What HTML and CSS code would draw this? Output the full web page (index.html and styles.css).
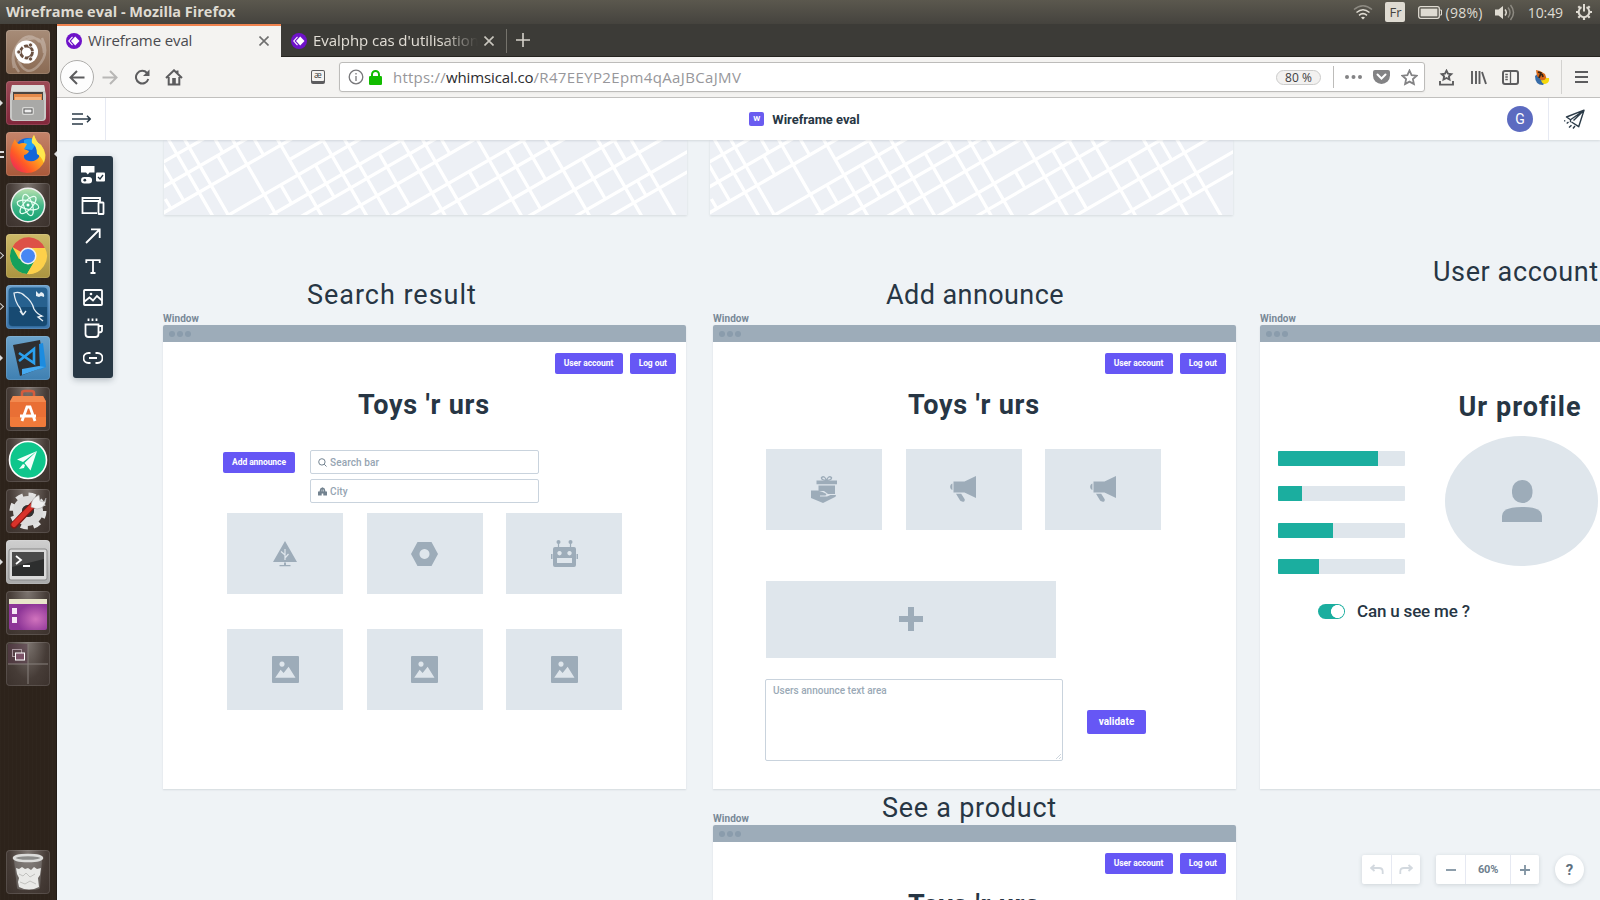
FILE: index.html
```html
<!DOCTYPE html>
<html lang="fr">
<head>
<meta charset="utf-8">
<title>Wireframe eval</title>
<link rel="stylesheet" href="styles.css">
</head>
<body>
<svg class="defs" aria-hidden="true">
  <symbol id="map" viewBox="0 0 523 75">
    <rect width="523" height="75" fill="#edf0f5"/>
    <g transform="translate(0 36.700) rotate(-30)" fill="none" stroke="#fff" stroke-width="3.300">
      <path d="M-60-13H480M-60 8.500H480M-60 31H480M-60 65.500H480M-60 87H480M-60 103H480M117 123H480M-60 148H480M-60 167.500H480M-60 193.500H480M-60 216.500H480M-60 240H480M-60 257.500H480"/>
      <path d="M5-60V31M22.500-60V290M36.500-60V290M78-60V290M117-60V290M156-60V290M175 31V290M224-60V290M242.500-60V290M290-60V290M329-60V193.500M349-60V290M394-60V290M423-60V290"/>
      <path d="M57 8.500V31M97 8.500V31M97 65.500V87M137 65.500V87M137 87V103M198 87V103M198 103V123M259 103V123M198 123V148M267 148V167.500M310 148V167.500M310 167.500V193.500M310 193.500V216.500M371 193.500V216.500M408 193.500V216.500M371 216.500V240M408 240V257.500M117 48H156M-10 20V31M63-13V8.500"/>
    </g>
  </symbol>
  <symbol id="picture" viewBox="0 0 27 27"><path fill="#9dacb9" fill-rule="evenodd" d="M1 0h25a1 1 0 0 1 1 1v25a1 1 0 0 1-1 1H1a1 1 0 0 1-1-1V1a1 1 0 0 1 1-1zM3.200 21.800h20.300L16.600 10.800l-5 6.200-3-3.200zM10 5.500a2.600 2.600 0 1 0 .01 0z"/></symbol>
  <symbol id="megaphone" viewBox="0 0 27 27"><path fill="#9dacb9" d="M3.500 5.500h11L26 0v22l-11.500-5.500h-11zM2.400 7.500v6.500C-.6 13 -.6 8.500 2.400 7.500zM6 17.800h5.200l3.500 5.500c.6 3-3 3-4.600 1.300z"/></symbol>
  <symbol id="whim" viewBox="0 0 16 16"><circle cx="8" cy="8" r="8" fill="#6f12c9"/><path fill="#fff" d="m9.200 3.400 4.300 4.600-4.300 4.600L5 8z"/><path d="M6.500 3.800 2.800 8l3.700 4.200" fill="none" stroke="#fff" stroke-width="1.100"/></symbol>
</svg>

<header class="panel">
  <span class="panel-title">Wireframe eval - Mozilla Firefox</span>
  <div class="tray">
    <svg class="wifi" width="20" height="16" viewBox="0 0 20 16" fill="none" stroke="#dfdbd2" stroke-width="1.500"><path d="M1 5.500q9-7.500 18 0" stroke="#8d8a82"/><path d="M3.500 8.500q6.500-5.500 13 0M6 11.300q4-3.300 8 0"/><path d="m8 13.500 2 2 2-2q-2-1.500-4 0z" fill="#dfdbd2" stroke="none"/></svg>
    <span class="lang">Fr</span>
    <svg class="battery" width="24" height="13" viewBox="0 0 24 13"><rect x=".7" y=".7" width="20.600" height="11.600" rx="2" fill="none" stroke="#dfdbd2" stroke-width="1.300"/><rect x="2.600" y="2.600" width="16.800" height="7.800" fill="#dfdbd2"/><path d="M22 4h1.500v5H22" fill="none" stroke="#dfdbd2"/></svg>
    <span class="pct">(98%)</span>
    <svg class="sound" width="20" height="17" viewBox="0 0 20 17"><path fill="#dfdbd2" d="M0 5.500h3.500L8 2v13l-4.500-3.500H0z"/><path fill="none" stroke="#dfdbd2" stroke-width="1.500" d="M10 5.500q2.500 3 0 6"/><path fill="none" stroke="#8d8a82" stroke-width="1.500" d="M13 3.500q4 5 0 10M15.500 1q6 7.500 0 15"/></svg>
    <span class="clock">10:49</span>
    <svg class="gear" width="16" height="16" viewBox="0 0 16 16" fill="none" stroke="#dfdbd2"><path stroke-width="2" d="M5.500 3.200a5.300 5.300 0 1 0 5 0M8 0v7.500"/><path stroke-width="2.200" d="M0 8h2.500M13.500 8H16M8 13.500V16M2.300 2.300l1.700 1.700M13.700 2.300 12 4M2.300 13.700 4 12M13.700 13.700 12 12"/></svg>
  </div>
</header>

<div class="desktop">
  <nav class="launcher">
    <div class="tile ubuntu"><svg viewBox="0 0 44 44"><g fill="none" stroke="#fff" opacity=".28"><path d="M8 38Q3 17 20 10T38 23M13 42Q2 28 12 14T34 12M36 8Q44 24 32 36T12 30" stroke-width="2.500"/></g><circle cx="20.500" cy="22" r="11.500" fill="#fff"/><circle cx="20.500" cy="22" r="6" fill="none" stroke="#6b5142" stroke-width="2.800" stroke-dasharray="11 1.560"/><g fill="#6b5142" stroke="#fff" stroke-width=".8"><circle cx="12.800" cy="22" r="2.100"/><circle cx="24.500" cy="15" r="2.100"/><circle cx="24.500" cy="29" r="2.100"/></g></svg></div>
    <div class="tile files"><i class="pip"></i><svg viewBox="0 0 44 44"><path d="M6 4h32l2 10v22q0 4-4 4H8q-4 0-4-4V14z" fill="#c9c9c7"/><path d="M6 4h32l1 6H5z" fill="#dededc"/><path d="M7 11h30v10H7z" fill="#4c4440"/><path d="M8 13h28v8H8z" fill="#e58a4b"/><path d="M9 16h26v5H9z" fill="#f6b27c"/><path d="M6 19h32v18q0 2-2 2H8q-2 0-2-2z" fill="#a9a9a7"/><rect x="16" y="26" width="12" height="8" rx="2" fill="#d8d8d6"/><rect x="18" y="28" width="8" height="4" fill="#eee" stroke="#555"/></svg></div>
    <div class="tile firefox"><i class="pip two"></i><i class="pip right"></i><svg viewBox="0 0 44 44"><defs><linearGradient id="ff" x1="1" y1="0" x2="0" y2="1"><stop offset="0" stop-color="#fff35a"/><stop offset=".38" stop-color="#ffb01f"/><stop offset=".68" stop-color="#ff5a26"/><stop offset="1" stop-color="#e8136d"/></linearGradient></defs><circle cx="22" cy="20" r="14" fill="#1565d8"/><path d="M18 8q7-4 13 2l-5 8-8-1z" fill="#1e9df5"/><path d="M28 3q2 7 7 10 8 10 2 19-6 9-16 9Q8 40 5 29 2 18 9 7q1 4 4 5 4-2 8 0l-3 5 5 2q-1 3-5 4-1 5 5 6 7 1 10-4 2-9-5-14-2-4 0-8z" fill="url(#ff)"/><path d="M28 3q2 7 7 10 6 8 3 18-3-7-7-9 0-8-5-11-1-4 2-8z" fill="#ffe84d"/></svg></div>
    <div class="tile dark"><svg viewBox="0 0 44 44"><defs><linearGradient id="at" x2="0" y2="1"><stop offset="0" stop-color="#b9e2b0"/><stop offset=".55" stop-color="#3fb587"/><stop offset="1" stop-color="#12a071"/></linearGradient></defs><circle cx="22" cy="22" r="16.700" fill="url(#at)" stroke="#eee" stroke-width="1.500"/><g fill="none" stroke="#e8fff3" stroke-width="1.200"><ellipse cx="22" cy="22" rx="11" ry="4.300" transform="rotate(12 22 22)"/><ellipse cx="22" cy="22" rx="11" ry="4.300" transform="rotate(72 22 22)"/><ellipse cx="22" cy="22" rx="11" ry="4.300" transform="rotate(132 22 22)"/></g><circle cx="22" cy="22" r="1.500" fill="#fff"/></svg></div>
    <div class="tile chrome"><i class="pip open"></i><svg viewBox="0 0 44 44"><circle cx="22" cy="22" r="18" fill="#fdd04a"/><path d="M22 22 6.400 13A18 18 0 0 1 39 14.500H22z" fill="#dd5147"/><path d="M6.400 13A18 18 0 0 0 21 40l8.500-14L22 22 13 25z" fill="#15a05c"/><path d="M22 14h17A18 18 0 0 1 21 40l8-14z" fill="#fdd04a"/><circle cx="22" cy="22" r="8.500" fill="#f1f1f1"/><circle cx="22" cy="22" r="7" fill="#4687f4"/></svg></div>
    <div class="tile mysql"><i class="pip open"></i><svg viewBox="0 0 44 44"><rect x="2.500" y="2.500" width="39" height="39" rx="4" fill="#27618f"/><path d="M3 22h38v15q0 4-4 4H7q-4 0-4-4z" fill="#174a72"/><path d="M17 30 14 23Q9 17 8 8q6-2 11 3 7 5 9 13 3 5 8 7l-4 1 5 4M17 30l3-4M17 30l-3-4" fill="none" stroke="#e6eef4" stroke-width="1.300"/><path d="m30 6 3 3 2-2q4 1 3 5l-3-1-2 1-3-1z" fill="#e6eef4"/></svg></div>
    <div class="tile code"><i class="pip"></i><svg viewBox="0 0 44 44"><path d="M7 9 34 4l4 27-24 9z" fill="#2e2e30"/><path d="m33 8 4-1 3 24-6 3z" fill="#1c8ce0"/><path d="M16 33l17-3 6 1-23 8z" fill="#45a9f0"/><path d="M13 17 28 27V13L13 25" fill="none" stroke="#2ba0ee" stroke-width="2.600"/></svg></div>
    <div class="tile dark"><svg viewBox="0 0 44 44"><path d="M16 10V6q0-2 3-2h6q3 0 3 2v4" fill="none" stroke="#d35d3e" stroke-width="2.500"/><path d="M7 9h30l3 5v24q0 2-2 2H6q-2 0-2-2V14z" fill="#e96f35"/><path d="M7 9h30l3 6H4z" fill="#f28a50"/><path d="M4 30h36v8q0 2-2 2H6q-2 0-2-2z" fill="#f07a3a"/><path d="m16 34 5-14h3l5 14M14 29h16" fill="none" stroke="#fff" stroke-width="2.800"/></svg></div>
    <div class="tile dark"><svg viewBox="0 0 44 44"><circle cx="22" cy="22" r="18.500" fill="#0fc68c" stroke="#fff" stroke-width="1.600"/><path d="M31 13 11 21.500l6 2.500zM31 13 18.500 25l6 7.500zM17 26l-4 5 5-1 1-3z" fill="#f5fffb"/></svg></div>
    <div class="tile dark"><svg viewBox="0 0 44 44"><circle cx="22" cy="22" r="16" fill="none" stroke="#e2e2e2" stroke-width="5" stroke-dasharray="7 5.570"/><circle cx="22" cy="22" r="10.500" fill="none" stroke="#dcdcdc" stroke-width="9"/><circle cx="22" cy="22" r="6" fill="#333"/><path d="M29 14 8 36" stroke="#7e1712" stroke-width="7" stroke-linecap="round"/><path d="M28 15 8 35.500" stroke="#d8322a" stroke-width="5" stroke-linecap="round"/><path d="M25 18q0-9 8-12l1 6 4 1 2-4q0 10-9 11z" fill="#efefef" stroke="#aaa" stroke-width=".6"/></svg></div>
    <div class="tile term"><i class="pip"></i><svg viewBox="0 0 44 44"><rect x="3" y="9" width="38" height="31" rx="2" fill="#d9d9d9" stroke="#888"/><rect x="6" y="12" width="32" height="24" fill="#2d2e2e"/><path d="M6 12h32v7L6 27z" fill="#4a4a4a"/><path d="m10 16 5 4-5 4M17 26h7" fill="none" stroke="#fff" stroke-width="1.800"/></svg></div>
    <div class="tile dark"><svg viewBox="0 0 44 44"><defs><radialGradient id="wp" cx=".7" cy=".65"><stop offset="0" stop-color="#d173bd"/><stop offset="1" stop-color="#8d3597"/></radialGradient></defs><rect x="3" y="8" width="38" height="31" rx="2" fill="url(#wp)"/><path d="M3 8h38v5H3z" fill="#e8e5cb"/><path d="M6 17h5v6H6zM6 26h5v6H6z" fill="#f6e9f5"/></svg></div>
    <div class="tile dark"><svg viewBox="0 0 44 44"><path d="M2 2h20v20H2z" fill="#59394c" opacity=".5"/><path d="M22 2v40M2 22h40" stroke="#87807c"/><rect x="6.500" y="7.500" width="9" height="7" fill="none" stroke="#a9989f"/><rect x="9.500" y="11" width="9" height="7" fill="#7b5368" stroke="#fff"/></svg></div>
    <div class="tile dark trash"><svg viewBox="0 0 44 44"><path d="m8 10 3 28q0 2 11 2t12-2l2-28z" fill="#aaa" opacity=".35"/><path d="m10 18 3 1 3-2 3 2 3-1 3 2 3-3 3 2 4-1-1 7-2 3 1 9q-10 5-20 0l-1-5 1-4-2-4z" fill="#e9e9e7"/><path d="m13 24 4 2 3-3 4 4 5-3M14 32l5 2 5-3 6 3" fill="none" stroke="#c2c2bf"/><ellipse cx="22" cy="8" rx="14" ry="3" fill="#8b8b89" stroke="#dcdcda" stroke-width="2.500"/></svg></div>
  </nav>

  <main class="browser">
    <div class="tabs">
      <div class="tab active"><svg width="16" height="16"><use href="#whim"/></svg><span class="tab-name">Wireframe eval</span><svg class="x" width="10" height="10" viewBox="0 0 10 10"><path d="m.5.5 9 9m0-9-9 9"/></svg></div>
      <div class="tab"><svg width="16" height="16"><use href="#whim"/></svg><span class="tab-name fade">Evalphp cas d'utilisation</span><svg class="x" width="10" height="10" viewBox="0 0 10 10"><path d="m.5.5 9 9m0-9-9 9"/></svg></div>
      <div class="new-tab"><svg width="14" height="14" viewBox="0 0 14 14"><path d="M7 0v14M0 7h14"/></svg></div>
    </div>
    <div class="toolbar">
      <div class="back"><svg width="16" height="15" viewBox="0 0 16 15"><path d="M15.500 7.500h-14M8 1 1.500 7.500 8 14"/></svg></div>
      <svg class="fwd" width="16" height="15" viewBox="0 0 16 15"><path d="M.5 7.500h14M8 1l6.500 6.500L8 14"/></svg>
      <svg class="reload" width="16" height="16" viewBox="0 0 16 16"><path d="M13 4a6.300 6.300 0 1 0 1.300 6"/><path class="solid" d="M15.500.5V7H9z"/></svg>
      <svg class="home" width="18" height="17" viewBox="0 0 18 17"><path d="M1 9 9 1.300 17 9M3.700 8v7.500h10.600V8M12.500 1.500V4"/><path class="solid" d="M7.200 9h3.600v6H7.200z"/></svg>
      <div class="reader"><span>æ</span></div>
      <div class="urlbar">
        <svg width="16" height="16" viewBox="0 0 16 16" class="info"><circle cx="8" cy="8" r="6.800"/><path d="M8 7v5M8 4v1.600"/></svg>
        <svg width="13" height="15" viewBox="0 0 13 15"><path d="M3 7V4.500a3.500 3.500 0 0 1 7 0V7" fill="none" stroke="#12bc00" stroke-width="2.200"/><rect y="6" width="13" height="9" rx="1.300" fill="#12bc00"/></svg>
        <span class="url"><span class="proto">https://</span><b>whimsical.co</b><span class="path">/R47EEYP2Epm4qAaJBCaJMV</span></span>
        <span class="zoom-pill">80 %</span>
        <i class="sep"></i>
        <svg class="grey dots3" width="17" height="4" viewBox="0 0 17 4"><circle cx="2" cy="2" r="2"/><circle cx="8.500" cy="2" r="2"/><circle cx="15" cy="2" r="2"/></svg>
        <svg class="grey pocket" width="17" height="14" viewBox="0 0 17 14"><path d="M2 0h13q2 0 2 2v3.500a8.500 8.500 0 0 1-17 0V2Q0 0 2 0z"/><path d="m4.500 4.500 4 4 4-4" fill="none" stroke="#fff" stroke-width="2" stroke-linecap="round"/></svg>
        <svg class="star" width="17" height="17" viewBox="0 0 17 17"><path d="m8.500 1.500 2.100 4.600 5 .6-3.700 3.400 1 5-4.400-2.500-4.400 2.500 1-5L1.400 6.700l5-.6z"/></svg>
      </div>
      <svg class="ic tray-star" width="15" height="17" viewBox="0 0 15 17"><path d="m7.500 1.700 1.500 3 3.300.4-2.400 2.300.6 3.200-3-1.600-3 1.600.6-3.200-2.400-2.300 3.300-.4zM1 12v3.600h13V12"/></svg>
      <svg class="ic lib" width="16" height="15" viewBox="0 0 16 15"><path d="M1 1v13M5 1v13M8.500 1v13M11 2l4 12"/></svg>
      <svg class="ic side" width="17" height="15" viewBox="0 0 17 15"><rect x="1" y="1" width="15" height="13" rx="2"/><path d="M8.500 1v13M3.300 4.500h2.500M3.300 7h2.500M3.300 9.500h2.500" stroke-width="1.300"/></svg>
      <svg class="fox" width="16" height="17" viewBox="0 0 16 17"><path d="M1 7q0 9 8 9l3-4L6 3z"/><path d="m2 1 4 1 5 3 2 6-6 0-4-4z"/><path d="m4 3 3 1-2 5M8 5l1 3"/><path d="M7 11q4 1 5-2h3q1 5-4 6-3 0-4-4z"/></svg>
      <i class="tool-sep"></i>
      <svg class="ic burger" width="13" height="12" viewBox="0 0 13 12"><path d="M0 1h13M0 6h13M0 11h13"/></svg>
    </div>

    <div class="app-head">
      <div class="menu-cell"><svg width="20" height="12" viewBox="0 0 20 12"><path d="M0 1h11M0 6h18M0 11h11M15 2.800 18.300 6 15 9.200"/></svg></div>
      <div class="doc"><span class="doc-icon">W</span><span class="doc-name">Wireframe eval</span></div>
      <div class="avatar">G</div>
      <div class="send-cell"><svg width="21" height="21" viewBox="0 0 21 21"><path d="M20 1.200 2.500 8l4 2.800L20 1.200l-5.300 16.500L7.500 13M6.500 10.800v2.500M20 1.200 9.500 11.500M4.500 13l-1.800 1.500M7.500 16.200 5 18.500M11 17l-2 2.500M1.200 11.500l-1 .8"/></svg></div>
    </div>

    <section class="canvas">
      <div class="board">
        <svg class="map m1" width="523" height="75"><use href="#map"/></svg>
        <svg class="map m2" width="523" height="75"><use href="#map"/></svg>

        <h2 class="title t1">Search result</h2>
        <h2 class="title t2">Add announce</h2>
        <h2 class="title t3">User account</h2>
        <h2 class="title t4">See a product</h2>

        <span class="wlabel l1">Window</span>
        <span class="wlabel l2">Window</span>
        <span class="wlabel l3">Window</span>
        <span class="wlabel l4">Window</span>

        <article class="win w1">
          <div class="bar"><i></i><i></i><i></i></div>
          <div class="account"><span class="btn ua">User account</span><span class="btn lo">Log out</span></div>
          <h3 class="brand">Toys 'r urs</h3>
          <span class="btn add">Add announce</span>
          <div class="fields">
            <div class="field"><svg width="9" height="9" viewBox="0 0 9 9"><circle cx="3.900" cy="3.900" r="3.200"/><path d="m6.200 6.200 2.300 2.300"/></svg>Search bar</div>
            <div class="field city"><svg width="9" height="9" viewBox="0 0 9 9"><path class="solid" fill-rule="evenodd" d="M0 8.500V4.500h1.500L2.300 1.500 4.500.3l2.200 1.200.8 3H9v4H5.300v-2H3.700v2zM3.700 2.500v2h.5v-2zM5 2.500v2h.5v-2z"/></svg>City</div>
          </div>
          <div class="cards">
            <div class="card"><svg width="24" height="26" viewBox="0 0 24 26"><path fill="#9dacb9" d="M12 0 24 21H0zM11 21.500h2V24h4.500v1.200h-11V24H11z"/><path d="M12 8v11M12 14 8 10.500M12 17l3.500-4" fill="none" stroke="#dfe6ec" stroke-width="1.200"/></svg></div>
            <div class="card"><svg width="27" height="24" viewBox="0 0 27 24"><path fill="#9dacb9" fill-rule="evenodd" d="M6.500 0h14L27 12l-6.500 12h-14L0 12zM13.500 7a5 5 0 1 0 .01 0z"/></svg></div>
            <div class="card"><svg width="27" height="27" viewBox="0 0 27 27"><path fill="#9dacb9" fill-rule="evenodd" d="M4 7h19q2 0 2 2v16q0 2-2 2H4q-2 0-2-2V9q0-2 2-2zM8.500 11a2.200 2.200 0 1 0 .01 0zM18.500 11a2.200 2.200 0 1 0 .01 0zM6 18v5h15v-5zM0 14h1.500v5H0zM25.500 14H27v5h-1.500z"/><circle cx="7.500" cy="2" r="2" fill="#9dacb9"/><circle cx="19.500" cy="2" r="2" fill="#9dacb9"/><path d="M7.500 2v5M19.500 2v5" stroke="#9dacb9" stroke-width="1.200"/></svg></div>
            <div class="card"><svg width="27" height="27"><use href="#picture"/></svg></div>
            <div class="card"><svg width="27" height="27"><use href="#picture"/></svg></div>
            <div class="card"><svg width="27" height="27"><use href="#picture"/></svg></div>
          </div>
        </article>

        <article class="win w2">
          <div class="bar"><i></i><i></i><i></i></div>
          <div class="account"><span class="btn ua">User account</span><span class="btn lo">Log out</span></div>
          <h3 class="brand">Toys 'r urs</h3>
          <div class="cards top">
            <div class="card"><svg width="27" height="27" viewBox="0 0 27 27"><path fill="#9dacb9" d="M5.500 4.500H26v3.700H5.500zM7.500 9.500H24V18h-7l-4-3H7.500zM0 14.500h6.500l5 1.500 4 2-1 1.500H9v1h7l3.500-1.500H25l-.5 1.700L12 27 0 22z"/><path d="M15.500 4.500q-5.500-.5-5-3 3-2.500 5 3zq5.500-.5 5-3-3-2.500-5 3z" fill="none" stroke="#9dacb9" stroke-width="1.300"/></svg></div>
            <div class="card"><svg width="27" height="27"><use href="#megaphone"/></svg></div>
            <div class="card"><svg width="27" height="27"><use href="#megaphone"/></svg></div>
          </div>
          <div class="drop"><svg width="24" height="24" viewBox="0 0 24 24"><path d="M12 0v24M0 12h24" stroke="#9dacb9" stroke-width="6"/></svg></div>
          <div class="area">Users announce text area<svg width="5" height="5" viewBox="0 0 5 5"><path d="M0 5 5 0M3 5l2-2"/></svg></div>
          <span class="btn validate">validate</span>
        </article>

        <article class="win w3">
          <div class="bar"><i></i><i></i><i></i></div>
          <h3 class="profile">Ur profile</h3>
          <div class="meter b1"><i style="width:100px"></i></div>
          <div class="meter b2"><i style="width:24px"></i></div>
          <div class="meter b3"><i style="width:55px"></i></div>
          <div class="meter b4"><i style="width:41px"></i></div>
          <div class="face"><svg width="40" height="42" viewBox="0 0 40 42"><rect x="10" y="0" width="20.500" height="23" rx="10" fill="#9dacb9"/><path d="M0 42v-6Q0 27 20 27t20 9v6z" fill="#9dacb9"/></svg></div>
          <div class="visible"><i class="switch"></i><span>Can u see me ?</span></div>
        </article>

        <article class="win w4">
          <div class="bar"><i></i><i></i><i></i></div>
          <div class="account"><span class="btn ua">User account</span><span class="btn lo">Log out</span></div>
          <h3 class="brand">Toys 'r urs</h3>
        </article>
      </div>

      <aside class="tools">
        <svg width="24" height="19" viewBox="0 0 24 19"><path class="f" d="M0 0h13.500v6.500h-5L6.800 8.600 5 6.500H0zM3.300 11h4.500a3 3 0 0 1 0 6.500H3.300a3 3 0 0 1 0-6.500z"/><rect class="f" x="15" y="6.500" width="9" height="9" rx="1"/><circle cx="3.800" cy="14.200" r="1.400" fill="#283845"/><path class="tick" d="m17 11 2 2 3-4"/></svg>
        <svg width="24" height="18" viewBox="0 0 24 18"><path d="M16 16.200H1.500V1H19v4M1.500 4H19"/><rect x="17.500" y="5.500" width="5" height="11.500" rx=".6"/></svg>
        <svg width="16" height="16" viewBox="0 0 16 16"><path d="M1 15 14.500 1.500M6 1.300h8.700V10"/></svg>
        <svg width="16" height="15" viewBox="0 0 16 15"><path d="M1.300 4V1.200h13.400V4M8 1.200V14M5.500 14h5"/></svg>
        <svg width="20" height="17" viewBox="0 0 20 17"><rect x="1" y="1" width="18" height="15" rx=".8"/><path d="m1.500 12.500 5-4 3.500 3 4-4.500 5 4.500"/><circle class="f" cx="8" cy="5" r="1.300"/></svg>
        <svg width="19" height="20" viewBox="0 0 19 20"><path d="M1.500 6.500h13V16q0 3-3 3h-7q-3 0-3-3zM14.500 8H18v4.500q0 2-3.500 2M4.500.5V3M8.500.5V3M12.500.5V3"/></svg>
        <svg width="20" height="12" viewBox="0 0 20 12"><path d="M7.500 1H5.500a5 5 0 0 0 0 10h2M12.500 1h2a5 5 0 0 1 0 10h-2M6 6h8"/></svg>
      </aside>

      <div class="controls">
        <div class="group undo">
          <span><svg width="14" height="11" viewBox="0 0 14 11"><path d="M4.500 1 1.200 4l3.300 3M1.500 4H9q3.700 0 3.700 3.500v2.500"/></svg></span>
          <span><svg width="14" height="11" viewBox="0 0 14 11"><path d="M9.500 1l3.300 3-3.300 3M12.500 4H5Q1.300 4 1.300 7.500v2.500"/></svg></span>
        </div>
        <div class="group zoom">
          <span><svg width="10" height="10" viewBox="0 0 10 10"><path d="M0 5h10"/></svg></span>
          <b>60%</b>
          <span><svg width="10" height="10" viewBox="0 0 10 10"><path d="M0 5h10M5 0v10"/></svg></span>
        </div>
        <div class="help">?</div>
      </div>
    </section>
  </main>
</div>
</body>
</html>
```
FILE: styles.css
```css
* { box-sizing: border-box; }
body { margin: 0; width: 1600px; height: 900px; overflow: hidden; font-family: Roboto, "Liberation Sans", sans-serif; color: #273644; }
svg { display: block; flex: none; }
h2, h3 { margin: 0; }
.defs { position: absolute; width: 0; height: 0; }

/* system panel */
.panel { height: 24px; display: flex; align-items: center; justify-content: space-between; padding: 0 8px 0 6px; background: linear-gradient(#5b584e, #45433e); color: #dfdbd2; font-family: "Open Sans", sans-serif; }
.panel-title { font-weight: 700; font-size: 14.500px; line-height: 24px; }
.tray { display: flex; align-items: center; font-size: 14px; }
.lang { width: 20px; height: 20px; margin-left: 12px; border-radius: 2px; background: #dfdbd2; color: #45433e; text-align: center; font-size: 13px; line-height: 20px; }
.battery { margin-left: 13px; }
.pct { margin-left: 3px; letter-spacing: .3px; }
.sound { margin-left: 12px; }
.clock { margin-left: 13px; letter-spacing: -.1px; }
.gear { margin-left: 13px; }

.desktop { display: flex; height: 876px; }

/* launcher */
.launcher { width: 57px; flex: none; padding: 6px 7px 6px 6px; display: flex; flex-direction: column; gap: 7px; background: repeating-linear-gradient(90deg, rgba(255,255,255,.012) 0 1px, transparent 1px 4px), #2d231b; border-right: 1px solid #211a15; }
.tile { position: relative; width: 44px; height: 44px; border-radius: 4px; box-shadow: inset 0 0 0 1px rgba(255,255,255,.12); }
.tile svg { width: 44px; height: 44px; }
.ubuntu { background: linear-gradient(#a78c78, #8a6a53); }
.files { background: linear-gradient(#9c4a56, #81263a); }
.firefox { background: linear-gradient(#c4846a, #a9593a); }
.dark { background: radial-gradient(ellipse at 50% 0, #7d7570, #463c37 60%, #3b312c); }
.chrome { background: linear-gradient(#cdb968, #ab9440); }
.mysql { background: linear-gradient(#6ba0cc, #3a73a8); }
.code { background: linear-gradient(#6ca3cb, #3f80b2); }
.term { background: linear-gradient(#cfcfcf, #a9a9a9); }
.trash { margin-top: auto; }
.pip { position: absolute; left: -6px; top: 19px; border: 3px solid transparent; border-left-color: #dedede; border-right: 0; }
.pip.two { width: 4px; height: 7px; border: solid #dedede; border-width: 2px 0; }
.pip.right { left: auto; right: -7px; border: 3.500px solid transparent; border-right-color: #dedede; border-left: 0; }
.pip.open { width: 5px; height: 5px; border: solid #cfcfcf; border-width: 1px 1px 0 0; left: -8px; transform: rotate(45deg); }

/* browser chrome */
.browser { width: 1543px; display: flex; flex-direction: column; font-family: "Open Sans", sans-serif; }
.tabs { height: 33px; display: flex; background: #3c3b37; border-bottom: 1px solid #25241f; }
.tab { width: 225px; display: flex; align-items: center; padding: 1px 12px 0 10px; color: #e2ded6; font-size: 15px; height: 33px; }
.tab.active { width: 224px; height: 33px; padding: 0 12px 2px 9px; background: #f4f3f1; color: #4a4a4f; border-top: 2px solid #f0834f; }
.tab-name { margin-left: 6px; flex: 1; white-space: nowrap; overflow: hidden; letter-spacing: -.12px; line-height: 22px; padding-bottom: 2px; }
.tab:not(.active) .tab-name { flex: 0 0 165px; margin-right: 6px; letter-spacing: -.05px; }
.fade { -webkit-mask-image: linear-gradient(90deg, #000 78%, transparent); mask-image: linear-gradient(90deg, #000 78%, transparent); }
.x path { fill: none; stroke: #6f6f6f; stroke-width: 1.600; }
.tab:not(.active) .x path { stroke: #c9c6be; }
.new-tab { border-left: 1px solid #75736c; height: 24px; margin-top: 5px; padding: 4px 0 0 9px; }
.new-tab path { stroke: #d5d2ca; stroke-width: 1.600; }
.toolbar { height: 41px; display: flex; align-items: center; background: #f4f3f1; border-bottom: 1px solid #c3c2c0; }
.toolbar svg path { fill: none; stroke: #5c5c5e; stroke-width: 2; }
.toolbar svg path.solid { fill: #5c5c5e; stroke: none; }
.back { width: 34px; height: 34px; margin-left: 3px; border: 1px solid #aeadab; border-radius: 50%; background: #fdfdfd; display: flex; align-items: center; justify-content: center; }
.toolbar .fwd { margin-left: 8px; }
.toolbar .fwd path { stroke: #b8b7b6; }
.reload { margin-left: 16px; }
.home { margin-left: 15px; }
.reader { width: 14px; height: 14px; margin: 0 14px 0 128px; border-radius: 2px; background: #5c5c5e; padding: 1px; }
.reader span { display: block; height: 10px; background: #f4f3f1; border-radius: 1px; font-size: 9px; line-height: 8px; text-align: center; color: #444; }
.urlbar { width: 1086px; height: 30px; display: flex; align-items: center; padding: 0 6px 0 8px; background: #fff; border: 1px solid #bdbcba; border-radius: 3px; box-shadow: 0 1px 2px rgba(0,0,0,.05); }
.urlbar .info circle, .urlbar .info path { fill: none; stroke: #77777a; stroke-width: 1.300; }
.urlbar .info { margin-right: 5px; }
.toolbar .urlbar svg path[stroke="#12bc00"] { stroke: #12bc00; }
.url { flex: 1; margin-left: 11px; font-size: 15px; line-height: 26px; color: #97979b; }
.url b { font-weight: 400; color: #2c2c2e; letter-spacing: -.12px; }
.url .proto { letter-spacing: .23px; }
.url .path { letter-spacing: .36px; }
.zoom-pill { width: 45px; height: 15px; border: 1px solid #cccccb; border-radius: 8px; background: #f2f1f0; color: #3d3d3f; font-size: 12px; line-height: 13px; text-align: center; }
.sep { width: 1px; height: 22px; margin: 0 11px 0 12px; background: #bdbcba; }
.toolbar .grey { fill: #838385; }
.toolbar .pocket { margin: 0 11px; }
.toolbar .pocket path:first-child { fill: #838385; stroke: none; }
.toolbar .pocket path:last-child { stroke: #fff; }
.toolbar .star path { stroke: #838385; stroke-width: 1.800; }
.ic rect { fill: none; stroke: #5c5c5e; stroke-width: 2; }
.toolbar .ic path { stroke-width: 1.900; }
.toolbar .side path { stroke-width: 1.300; }
.tray-star { margin-left: 13.500px; }
.lib { margin-left: 17px; }
.side { margin-left: 15px; }
.fox { margin-left: 15px; }
.toolbar .fox path { stroke: none; }
.toolbar .fox path:nth-child(1) { fill: #376ca8; }
.toolbar .fox path:nth-child(2) { fill: #d96818; }
.toolbar .fox path:nth-child(3) { stroke: #382316; stroke-width: 1.800; }
.toolbar .fox path:nth-child(4) { fill: #f6d80b; }
.tool-sep { width: 1px; height: 34px; margin: 0 13px 0 11px; background: #d3d2d0; }

/* app header */
.app-head { height: 42px; display: flex; align-items: center; background: #fff; position: relative; z-index: 2; box-shadow: 0 1px 2px rgba(40,56,69,.14); font-family: Roboto, sans-serif; }
.menu-cell { width: 49px; height: 42px; border-right: 1px solid #e6e9f2; display: flex; align-items: center; padding-left: 15px; }
.menu-cell path, .send-cell path { fill: none; stroke: #2b3b48; stroke-width: 1.600; stroke-linejoin: round; }
.doc { flex: 1; display: flex; align-items: center; justify-content: center; padding-right: 4px; }
.doc-icon { width: 15px; height: 14px; border-radius: 2px; background: #6a5cf0; color: #fff; font-size: 8px; font-weight: 700; line-height: 14px; text-align: center; margin-right: 8px; }
.doc-name { font-size: 13px; font-weight: 700; letter-spacing: -.05px; }
.avatar { width: 26px; height: 26px; margin-right: 15px; border-radius: 50%; background: #5c6bc0; color: #fff; font-size: 14px; line-height: 27px; text-align: center; }
.send-cell { width: 52px; height: 42px; border-left: 1px solid #e6e9f2; display: flex; align-items: center; padding-left: 15px; }
.send-cell path { stroke-width: 1.400; }

/* canvas: items sit at free positions on the board */
.canvas { flex: 1; position: relative; overflow: hidden; background: #eff3f6; font-family: Roboto, sans-serif; }
.board { position: absolute; left: -57px; top: -140px; width: 1600px; height: 900px; }
.map { position: absolute; top: 140px; box-shadow: 0 1px 2px rgba(40,56,69,.12); }
.m1 { left: 163.500px; }
.m2 { left: 709.500px; }
.title { position: absolute; font-weight: 400; font-size: 27px; line-height: 32px; white-space: nowrap; }
.t1 { left: 307px; top: 279px; letter-spacing: .98px; }
.t2 { left: 886px; top: 279px; letter-spacing: .42px; }
.t3 { left: 1433px; top: 256px; letter-spacing: .6px; }
.t4 { left: 882px; top: 792px; letter-spacing: .74px; }
.wlabel { position: absolute; font-size: 10px; line-height: 12px; font-weight: 700; color: #788896; letter-spacing: .05px; }
.l1 { left: 163px; top: 313px; }
.l2 { left: 713px; top: 313px; }
.l3 { left: 1260px; top: 313px; }
.l4 { left: 713px; top: 813px; }
.win { position: absolute; width: 523px; height: 464px; background: #fff; border-radius: 2px 2px 0 0; box-shadow: 0 1px 2px rgba(40,56,69,.13); }
.w1 { left: 163px; top: 325px; }
.w2 { left: 713px; top: 325px; }
.w3 { left: 1260px; top: 325px; }
.w4 { left: 713px; top: 825px; }
.bar { height: 17px; display: flex; align-items: center; gap: 2px; padding-left: 6px; background: #9dacb9; border-radius: 2px 2px 0 0; }
.bar i { width: 6px; height: 6px; border-radius: 50%; background: #8a9cac; }
.btn { display: flex; align-items: center; justify-content: center; height: 20.500px; border-radius: 2px; background: #6657f5; color: #fff; font-size: 8.500px; font-weight: 700; letter-spacing: -.08px; white-space: nowrap; padding-bottom: 1px; }
.account { display: flex; justify-content: flex-end; gap: 7px; padding: 11px 10px 0 0; }
.ua { width: 68px; }
.lo { width: 46.500px; }
.brand, .profile { position: absolute; font-size: 27px; line-height: 32px; font-weight: 700; white-space: nowrap; }
.brand { left: 195px; top: 64px; letter-spacing: .76px; }
.add { position: absolute; left: 60px; top: 127px; width: 72px; }
.fields { position: absolute; left: 147px; top: 125px; width: 229px; display: grid; gap: 5px; }
.field { height: 24px; display: flex; align-items: center; gap: 3px; padding-left: 7px; border: 1px solid #c9d3dd; border-radius: 2px; color: #95a4b2; font-size: 10px; font-weight: 500; letter-spacing: .12px; }
.field svg { fill: none; stroke: #72828f; stroke-width: 1; }
.field .solid { fill: #72828f; stroke: none; }
.cards { position: absolute; left: 64px; top: 188px; display: grid; grid-template-columns: repeat(3, 116px); gap: 33px 23.500px; }
.cards { row-gap: 35px; }
.cards.top { left: 53px; top: 124px; }
.card { height: 81px; background: #dfe6ec; display: flex; align-items: center; justify-content: center; }
.drop { position: absolute; left: 53px; top: 255.500px; width: 290px; height: 77px; background: #dfe6ec; display: flex; align-items: center; justify-content: center; }
.area { position: absolute; left: 52px; top: 354px; width: 297.500px; height: 82px; border: 1px solid #c9d3dd; border-radius: 2px; padding: 4px 7px; font-size: 10px; line-height: 13px; font-weight: 500; color: #9aa9b6; }
.area svg { position: absolute; right: 1px; bottom: 1px; stroke: #b9c4ce; fill: none; stroke-width: .7; }
.validate { position: absolute; left: 374px; top: 385px; width: 59px; height: 24px; font-size: 10px; letter-spacing: .03px; }
.profile { left: 198.500px; top: 66px; letter-spacing: 1.020px; }
.meter { position: absolute; left: 17.500px; width: 127.500px; height: 15px; border-radius: 1px; background: #dfe6ec; overflow: hidden; }
.meter i { display: block; height: 15px; background: #1bae9f; }
.b1 { top: 126px; }
.b2 { top: 161px; }
.b3 { top: 198px; }
.b4 { top: 233.500px; }
.face { position: absolute; left: 185px; top: 111px; width: 153px; height: 130px; border-radius: 50%; background: #dfe6ec; display: flex; align-items: center; justify-content: center; }
.visible { position: absolute; left: 58px; top: 276px; display: flex; align-items: center; gap: 12px; font-size: 17px; font-weight: 500; line-height: 20px; letter-spacing: -.17px; white-space: nowrap; }
.switch { width: 27px; height: 15px; border-radius: 8px; background: radial-gradient(circle at 19.500px 7.500px, #fff 6.200px, #1bae9f 6.800px); }

/* floating tool palette */
.tools { position: absolute; left: 16px; top: 16px; width: 40px; height: 222px; padding-top: 4.500px; border-radius: 3px; background: #283845; box-shadow: 0 2px 6px rgba(40,56,69,.3); display: grid; grid-auto-rows: 30.400px; place-items: center; align-content: start; }
.tools svg { fill: none; stroke: #fff; stroke-width: 1.800; }
.tools .f { fill: #fff; stroke: none; }
.tools .tick { stroke: #283845; stroke-width: 1.300; }
.tools circle[fill] { stroke: none; }

/* bottom controls */
.controls { position: absolute; right: 16px; bottom: 16px; display: flex; gap: 16px; }
.group { display: flex; height: 29px; border-radius: 2px; background: #fff; box-shadow: 0 1px 4px rgba(40,56,69,.16); }
.group > * { display: flex; align-items: center; justify-content: center; width: 29px; }
.group > * + * { border-left: 1px solid #e6e9f2; }
.group path { fill: none; stroke: #8093a2; stroke-width: 1.800; }
.undo path { stroke: #d3d9df; }
.zoom b { width: 45px; font-size: 11px; color: #6e808e; letter-spacing: -.2px; }
.help { width: 29px; height: 29px; border-radius: 50%; background: #fff; box-shadow: 0 1px 4px rgba(40,56,69,.16); color: #5f717f; font-size: 15px; font-weight: 700; line-height: 30px; text-align: center; }
```
